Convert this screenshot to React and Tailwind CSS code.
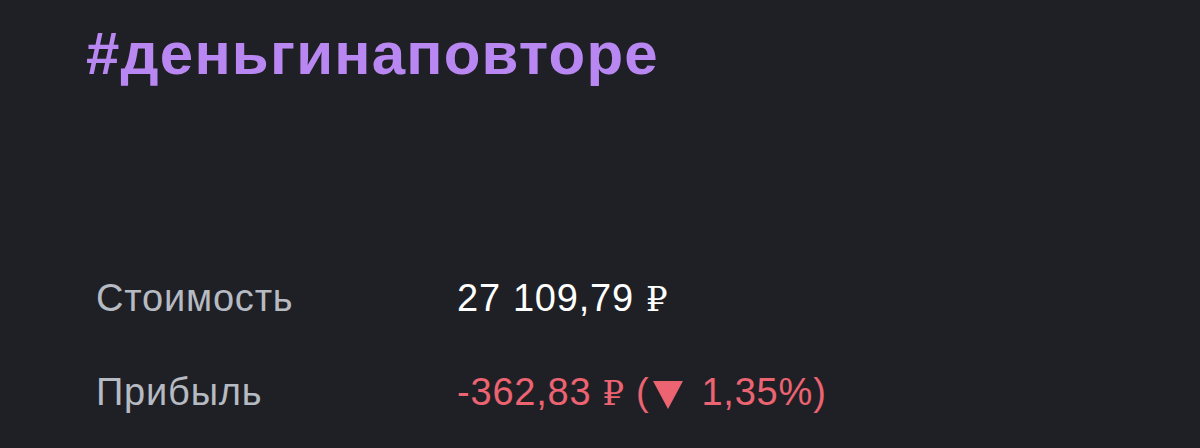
export default function App() {
  const rub = <span className="font-['Liberation_Serif','DejaVu_Serif',serif] text-[34px]">₽</span>;

  return (
    <div className="h-[448px] w-[1200px] overflow-hidden bg-[#1f2025] font-['Liberation_Sans',Arial,sans-serif]">
      <h1 className="pl-[86px] pt-[20px] text-[60px] font-bold leading-[68px] tracking-[1.2px] text-[#b987f2]">#деньгинаповторе</h1>
      <div className="mt-[188px] pl-[96px] text-[38px] leading-[44px] tracking-[0.8px]">
        <div className="flex">
          <span className="w-[361px] text-[#b6bac2]">Стоимость</span>
          <span className="flex items-baseline gap-[12px] text-white">
            <span>27</span>
            <span>109,79</span>
            {rub}
          </span>
        </div>
        <div className="mt-[48px] flex">
          <span className="w-[361px] text-[#b6bac2]">Прибыль</span>
          <span className="flex items-baseline gap-[11px] text-[#ec6371]">
            <span>-362,83</span>
            {rub}
            <span className="flex items-baseline gap-[18px]">
              <span className="flex items-baseline gap-[4px]">
                <span>(</span>
                <svg width="30" height="28" viewBox="0 0 30 28" className="self-center translate-y-[3px]">
                  <path d="M0 0H30L15 28Z" fill="#ec6371" />
                </svg>
              </span>
              <span>1,35%)</span>
            </span>
          </span>
        </div>
      </div>
    </div>
  );
}
